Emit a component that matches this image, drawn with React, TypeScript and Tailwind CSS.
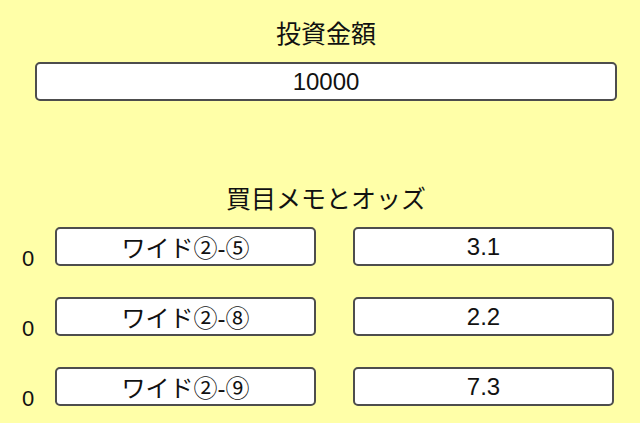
const font = { fontFamily: '"Liberation Sans", "Noto Sans CJK JP", sans-serif' }

const bets = [
  { count: 0, memo: 'ワイド②-⑤', odds: '3.1' },
  { count: 0, memo: 'ワイド②-⑧', odds: '2.2' },
  { count: 0, memo: 'ワイド②-⑨', odds: '7.3' },
]

function Box({ value, className = '' }: { value: string; className?: string }) {
  return (
    <input
      readOnly
      value={value}
      className={`h-[39px] rounded-[5px] border-2 border-[#4d4d4d] bg-white text-center text-[24px] text-[#111] outline-none ${className}`}
      style={font}
    />
  )
}

export default function App() {
  return (
    <div className="min-h-screen w-full bg-[#ffffa8] pt-[20px] text-[#111]" style={font}>
      <div className="pl-[35px] pr-[23px]">
        <h2 className="text-center text-[25px] leading-[28px]">投資金額</h2>
        <Box value="10000" className="mt-[14px] w-full" />

        <h2 className="mt-[84px] text-center text-[25px] leading-[28px]">買目メモとオッズ</h2>
      </div>

      <div className="mt-[14px] flex flex-col gap-[31px] pl-[22px]">
        {bets.map((b) => (
          <div key={b.memo} className="flex items-end">
            <span className="mb-[-4px] w-[33px] text-[22px] leading-[22px]">{b.count}</span>
            <Box value={b.memo} className="w-[261px]" />
            <Box value={b.odds} className="ml-[37px] w-[261px]" />
          </div>
        ))}
      </div>
    </div>
  )
}
